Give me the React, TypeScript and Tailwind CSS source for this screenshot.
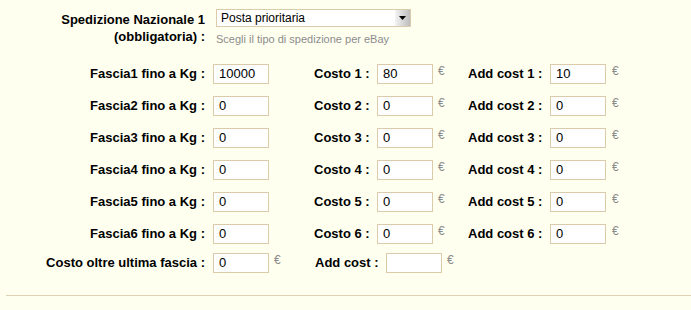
import React from "react";

const fasce = [
   { n: 1, kg: "10000", costo: "80", add: "10" },
   { n: 2, kg: "0", costo: "0", add: "0" },
   { n: 3, kg: "0", costo: "0", add: "0" },
   { n: 4, kg: "0", costo: "0", add: "0" },
   { n: 5, kg: "0", costo: "0", add: "0" },
   { n: 6, kg: "0", costo: "0", add: "0" },
];

const Field = ({ value }: { value: string }) => (
   <input
      type="text"
      defaultValue={value}
      className="w-[56px] h-[20px] border border-[#dccbaa] bg-white px-[5px] text-[13px] text-black outline-none"
   />
);

const Euro = () => (
   <span className="w-[7px] text-[12px] text-[#8a8a8a] leading-none -mt-[6px]">€</span>
);

const App = () => {
   return (
      <div className="w-[691px] h-[310px] bg-[#fffff0] font-['Liberation_Sans',Arial,sans-serif] text-[13px] text-black overflow-hidden">
         {/* tipo spedizione */}
         <div className="flex pt-[9px]">
            <div className="w-[205px] text-right font-bold text-[13px] leading-[17px] pt-[2px]">
               Spedizione Nazionale 1
               <br />
               (obbligatoria) :
            </div>
            <div className="ml-[11px] flex flex-col">
               <div className="w-[195px] h-[18px] border border-[#dccbaa] bg-white flex items-center">
                  <span className="flex-1 pl-[4px] text-[12px] leading-none">Posta prioritaria</span>
                  <span className="w-[15px] h-[16px] bg-gradient-to-r from-[#f4f4f4] to-[#bdbdbd] flex items-center justify-center">
                     <svg width="7" height="4" viewBox="0 0 7 4">
                        <path d="M0 0h7L3.5 4z" fill="#000" />
                     </svg>
                  </span>
               </div>
               <div className="mt-[4px] text-[11px] text-[#8c8c8c]">Scegli il tipo di spedizione per eBay</div>
            </div>
         </div>

         {/* fasce di peso */}
         <div className="mt-[16px] flex flex-col gap-[12px]">
            {fasce.map((f) => (
               <div key={f.n} className="flex items-center h-[20px]">
                  <span className="w-[205px] text-right font-bold">Fascia{f.n} fino a Kg :</span>
                  <span className="ml-[8px]">
                     <Field value={f.kg} />
                  </span>
                  <span className="ml-[45px] w-[55px] font-bold whitespace-nowrap">Costo {f.n} :</span>
                  <span className="ml-[8px]">
                     <Field value={f.costo} />
                  </span>
                  <span className="ml-[5px] flex">
                     <Euro />
                  </span>
                  <span className="ml-[23px] w-[74px] font-bold whitespace-nowrap">Add cost {f.n} :</span>
                  <span className="ml-[8px]">
                     <Field value={f.add} />
                  </span>
                  <span className="ml-[6px] flex">
                     <Euro />
                  </span>
               </div>
            ))}
            <div className="flex items-center h-[20px] -mt-[3px]">
               <span className="w-[205px] text-right font-bold">Costo oltre ultima fascia :</span>
               <span className="ml-[8px]">
                  <Field value="0" />
               </span>
               <span className="ml-[5px] flex">
                  <Euro />
               </span>
               <span className="ml-[34px] w-[63px] font-bold whitespace-nowrap">Add cost :</span>
               <span className="ml-[8px]">
                  <Field value="" />
               </span>
               <span className="ml-[5px] flex">
                  <Euro />
               </span>
            </div>
         </div>

         <div className="mt-[22px] ml-[6px] border-t border-[#e0d2b4]" />
      </div>
   );
};

export default App;
